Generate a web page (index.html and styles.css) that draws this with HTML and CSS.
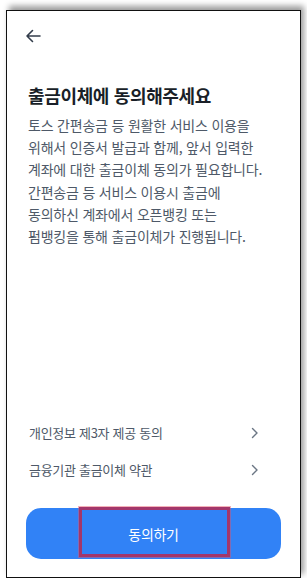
FILE: index.html
```html
<!DOCTYPE html>
<html lang="ko">
<head>
    <meta charset="UTF-8">
    <meta name="viewport" content="width=device-width, initial-scale=1.0">
    <title>출금이체 동의</title>
    <link rel="stylesheet" href="styles.css">
</head>
<body>

    <div class="frame">
        <div class="screen">
            <div class="topbar">
                <svg class="back" width="16" height="16" viewBox="0 0 16 16">
                    <path d="M15 8H2M7.5 2.5L2 8l5.5 5.5" fill="none" stroke="#333d4b" stroke-width="1.6" stroke-linecap="round" stroke-linejoin="round"/>
                </svg>
            </div>

            <h1 class="title">출금이체에 동의해주세요</h1>
            <p class="desc">토스 간편송금 등 원활한 서비스 이용을<br>위해서 인증서 발급과 함께, 앞서 입력한<br>계좌에 대한 출금이체 동의가 필요합니다.<br>간편송금 등 서비스 이용시 출금에<br>동의하신 계좌에서 오픈뱅킹 또는<br>펌뱅킹을 통해 출금이체가 진행됩니다.</p>

            <div class="spacer"></div>

            <ul class="terms">
                <li class="term">
                    <span>개인정보 제3자 제공 동의</span>
                    <svg width="8" height="12" viewBox="0 0 8 12"><path d="M1.5 1.5L6 6l-4.5 4.5" fill="none" stroke="#6b7684" stroke-width="1.4" stroke-linecap="round" stroke-linejoin="round"/></svg>
                </li>
                <li class="term">
                    <span>금융기관 출금이체 약관</span>
                    <svg width="8" height="12" viewBox="0 0 8 12"><path d="M1.5 1.5L6 6l-4.5 4.5" fill="none" stroke="#6b7684" stroke-width="1.4" stroke-linecap="round" stroke-linejoin="round"/></svg>
                </li>
            </ul>

            <button class="agree" type="button">
                동의하기
                <span class="mark"></span>
            </button>
        </div>
    </div>

</body>
</html>
```

FILE: styles.css
```css
/* рамка скриншота */
body {
    margin: 0;
    background-color: #ffffff;
    font-family: "Noto Sans CJK KR", "Noto Sans", sans-serif;
}
.frame {
    width: 293px;
    height: 566px;
    margin: 10px 0 0 6px;
    border: 1px solid #111111;
    background-color: #ffffff;
    box-shadow: 3px -4px 6px rgba(0, 0, 0, 0.4);
}

/* экран */
.screen {
    display: flex;
    flex-direction: column;
    height: 100%;
    box-sizing: border-box;
    padding: 0 19px 18px 19px;
}
.topbar {
    display: flex;
    align-items: center;
    height: 50px;
}
.back {
    margin-left: -1px;
}
.title {
    margin: 21px 0 0 2px;
    font-size: 18px;
    line-height: 26px;
    font-weight: 700;
    letter-spacing: -0.35px;
    color: #191f28;
}
.desc {
    margin: 6px 0 0 2px;
    font-size: 14px;
    line-height: 22.2px;
    letter-spacing: -0.2px;
    color: #4e5968;
}
.spacer {
    flex: 1;
}

/* список условий */
.terms {
    list-style: none;
    margin: 0;
    padding: 0;
}
.term {
    display: flex;
    justify-content: space-between;
    align-items: center;
    height: 37px;
    padding: 0 22px 0 3px;
    font-size: 13px;
    letter-spacing: -0.3px;
    color: #4e5968;
}

/* кнопка */
.agree {
    position: relative;
    height: 51px;
    margin-top: 20px;
    border: none;
    border-radius: 15px;
    background-color: #3182f6;
    color: white;
    font-family: inherit;
    font-size: 14px;
    letter-spacing: -0.3px;
}
.mark {
    position: absolute;
    left: 53px;
    top: -1px;
    width: 145px;
    height: 44px;
    border: 3px solid #a3366a;
    box-shadow: 0 0 0 1px rgba(230, 80, 100, 0.45);
}
```
